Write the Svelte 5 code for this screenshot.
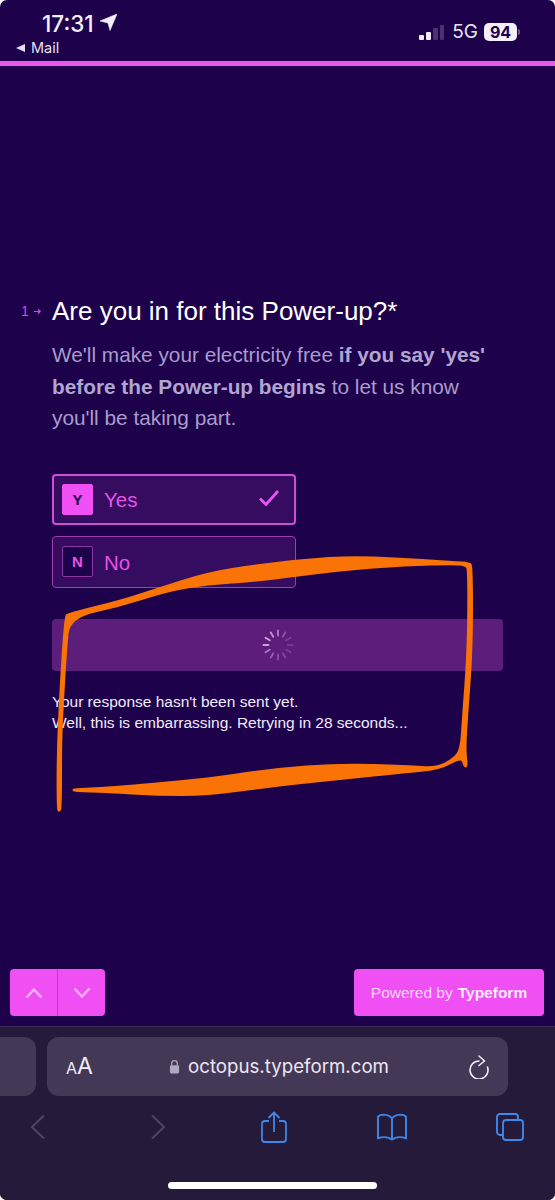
<script>
  const levels = [0.6, 0.35, 0.22, 0.18, 0.22, 0.26, 0.32, 0.42, 0.6, 0.85, 0.85, 0.75];
  const ticks = levels.map((opacity, i) => ({ angle: i * 30, opacity }));

  // Outline of the hand-drawn marker stroke, traced around its variable width.
  const outline = [
    [56.5, 810], [56.7, 750], [59, 700], [60.7, 670], [63, 635], [65, 616], [67, 613],
    [120, 600], [157, 588], [207, 572], [257, 564], [340, 555], [407, 558], [453, 561],
    [470, 562], [473, 566], [473, 650], [468, 717], [466, 750], [468, 765], [466, 768], [463, 766],
    [461.5, 758], [440, 770], [407, 773], [340, 780], [273, 787], [207, 796], [157, 796],
    [107, 793], [74, 792], [72, 790], [74, 788], [107, 787], [207, 778], [273, 768],
    [340, 763], [407, 765], [437, 767], [453, 758], [460, 749], [462, 717], [467, 650],
    [467.5, 570], [465, 566], [453, 565], [407, 566], [340, 571], [257, 582], [207, 585],
    [167, 592], [120, 607], [70, 618], [67, 650], [63, 717], [62, 750], [62, 810], [59, 812]
  ];
  const mid = (a, b) => [(a[0] + b[0]) / 2, (a[1] + b[1]) / 2];
  const scribble = outline.reduce((d, p, i) => {
    const m = mid(p, outline[(i + 1) % outline.length]);
    return `${d} Q${p[0]} ${p[1]} ${m[0]} ${m[1]}`;
  }, `M${mid(outline[outline.length - 1], outline[0]).join(' ')}`) + ' Z';
</script>

<div class="phone">
  <header class="status">
    <div class="status-left">
      <div class="time">17:31
        <svg class="loc" viewBox="0 0 17 17" width="17" height="17"><path d="M17 0 10 16.500 8 9 0 7Z" fill="#f3eefa" stroke="#f3eefa" stroke-width=".6" stroke-linejoin="round"/></svg>
      </div>
      <div class="back"><span class="tri"></span>Mail</div>
    </div>
    <div class="status-right">
      <div class="bars"><i class="on b1"></i><i class="on b2"></i><i class="b3"></i><i class="b4"></i></div>
      <span class="net">5G</span>
      <span class="batt">94</span><span class="nub"></span>
    </div>
  </header>
  <div class="progress"></div>

  <main class="form">
    <div class="question">
      <div class="num">1<svg viewBox="0 0 10 10" width="9" height="9"><path d="M1 5h7M5.500 2.500 8 5 5.500 7.500" fill="none" stroke="#d548d8" stroke-width="1.3"/></svg></div>
      <div class="body">
        <h1>Are you in for this Power-up?*</h1>
        <p class="desc">We'll make your electricity free <b>if you say 'yes' before the Power-up begins</b> to let us know you'll be taking part.</p>
        <div class="choices">
          <div class="choice selected">
            <span class="key">Y</span><span class="label">Yes</span>
            <svg class="check" viewBox="0 0 22 18" width="22" height="18"><path d="M2 9.500l6 6L20 2" fill="none" stroke="#ec55ef" stroke-width="2.700"/></svg>
          </div>
          <div class="choice">
            <span class="key">N</span><span class="label">No</span>
          </div>
        </div>
        <div class="submit">
          <svg viewBox="0 0 32 32" width="32" height="32">
            {#each ticks as t}
              <line x1="16" y1="1.500" x2="16" y2="6.500" stroke="#e3b8ee" stroke-width="1.900" stroke-linecap="round" opacity={t.opacity} transform="rotate({t.angle} 16 16)" />
            {/each}
          </svg>
        </div>
        <p class="msg">Your response hasn't been sent yet.<br />Well, this is embarrassing. Retrying in 28 seconds...</p>
      </div>
    </div>

    <div class="foot">
      <div class="arrows">
        <span class="arrow"><svg viewBox="0 0 18 12" width="18" height="12"><path d="M1.500 10.500 9 2.500l7.500 8" fill="none" stroke="#fbb2fb" stroke-width="2.400"/></svg></span>
        <span class="arrow second"><svg viewBox="0 0 18 12" width="18" height="12"><path d="M1.500 1.500 9 9.500l7.500-8" fill="none" stroke="#fbb2fb" stroke-width="2.400"/></svg></span>
      </div>
      <div class="powered"><span>Powered by</span><b>Typeform</b></div>
    </div>
  </main>

  <footer class="safari">
    <div class="url-row">
      <div class="prev-tab"></div>
      <div class="url">
        <span class="aa"><small>A</small>A</span>
        <span class="addr">
          <svg viewBox="0 0 12 16" width="11" height="15"><path d="M3 7V4.500a3 3 0 0 1 6 0V7" fill="none" stroke="#b0a8bf" stroke-width="1.400"/><rect x="1" y="6.500" width="10" height="9" rx="1.500" fill="#b0a8bf"/></svg>
          octopus.typeform.com
        </span>
        <svg class="reload" viewBox="0 0 22 24" width="22" height="24"><path d="M11 6A9 9 0 1 0 19.500 12" fill="none" stroke="#f1edf6" stroke-width="1.600" stroke-linecap="round"/><path d="M11 1l5.500 5L11 10.500" fill="none" stroke="#f1edf6" stroke-width="1.600" stroke-linecap="round" stroke-linejoin="round"/></svg>
      </div>
    </div>
    <nav class="tools">
      <svg viewBox="0 0 16 26" width="16" height="26"><path d="M14 1.500 2 13l12 11.500" fill="none" stroke="#4f4560" stroke-width="2"/></svg>
      <svg class="forward" viewBox="0 0 16 26" width="16" height="26"><path d="M2 1.500 14 13 2 24.500" fill="none" stroke="#4f4560" stroke-width="2"/></svg>
      <svg viewBox="0 0 26 32" width="26" height="32"><path d="M8 10H4a3 3 0 0 0-3 3v15a3 3 0 0 0 3 3h18a3 3 0 0 0 3-3V13a3 3 0 0 0-3-3h-4M13 21V2M7.500 7 13 1.500 18.500 7" fill="none" stroke="#3f87e8" stroke-width="1.800"/></svg>
      <svg viewBox="0 0 32 28" width="32" height="28"><path d="M16 5.500C13 1 5 1 2 3.500V25.500C6 23.500 12 23.500 16 26.500 20 23.500 26 23.500 30 25.500V3.500C27 1 19 1 16 5.500ZM16 5.500V26.500" fill="none" stroke="#3f87e8" stroke-width="1.900" stroke-linejoin="round"/></svg>
      <svg viewBox="0 0 30 30" width="30" height="30"><path d="M7 23H5a3 3 0 0 1-3-3V5a3 3 0 0 1 3-3h15a3 3 0 0 1 3 3v2" fill="none" stroke="#3f87e8" stroke-width="1.900"/><rect x="8" y="8" width="20" height="20" rx="3" fill="none" stroke="#3f87e8" stroke-width="1.900"/></svg>
    </nav>
    <div class="home"></div>
  </footer>

  <svg class="scribble" viewBox="0 0 555 1200" width="555" height="1200">
    <path fill="#f97306" d={scribble} />
  </svg>
</div>

<style>
  :global(body) { margin: 0; background: #fff; }
  .phone {
    position: relative;
    width: 555px;
    height: 1200px;
    overflow: hidden;
    display: flex;
    flex-direction: column;
    background: #1d024b;
    border-radius: 7px;
    font-family: "Liberation Sans", Arial, sans-serif;
    color: #fff;
  }
  .status {
    height: 61px;
    box-sizing: border-box;
    display: flex;
    justify-content: space-between;
    padding: 11px 35px 0 16px;
    flex: none;
  }
  .time {
    display: flex;
    align-items: center;
    gap: 6px;
    margin-left: 26px;
    font: 500 22.500px/26px Inter, sans-serif;
    color: #f3eefa;
  }
  .loc { margin-top: -3px; }
  .back {
    display: flex;
    align-items: center;
    gap: 6px;
    font: 400 14.500px/16px Inter, sans-serif;
    color: #e6dff0;
    margin-top: 3px;
  }
  .tri {
    width: 0; height: 0;
    border-style: solid;
    border-width: 4.500px 9px 4.500px 0;
    border-color: transparent #e6dff0 transparent transparent;
  }
  .status-right {
    display: flex;
    align-items: center;
    height: 22px;
    margin-top: 10px;
    font: 400 19px/22px Inter, sans-serif;
    color: #e8e2f2;
  }
  .bars { display: flex; align-items: flex-end; gap: 2px; height: 15px; margin-right: 8px; }
  .bars i { width: 4.750px; border-radius: 1px; background: #4a3270; }
  .bars .on { background: #f0ebf7; }
  .b1 { height: 5px; } .b2 { height: 8px; } .b3 { height: 12px; } .b4 { height: 15px; }
  .net { margin-right: 6px; }
  .batt {
    width: 33px; height: 18px;
    border-radius: 5px;
    background: #f3eff8;
    color: #1d024b;
    font: 700 16px/18px Inter, sans-serif;
    text-align: center;
  }
  .nub { width: 2px; height: 6px; margin-left: 1px; background: #6a5889; border-radius: 0 2px 2px 0; }
  .progress { height: 5px; flex: none; background: #ee55ee; }

  .form { flex: 1; min-height: 0; display: flex; flex-direction: column; justify-content: space-between; }
  .question {
    display: flex;
    padding-top: 230px;
  }
  .num {
    width: 52px;
    box-sizing: border-box;
    padding: 6px 0 0 21px;
    display: flex;
    align-items: flex-start;
    gap: 4px;
    font-size: 14px;
    line-height: 18px;
    color: #d548d8;
    flex: none;
  }
  .num svg { margin-top: 5px; }
  .body { width: 451px; }
  h1 {
    margin: 0;
    font-size: 26px;
    font-weight: 400;
    line-height: 30px;
    color: #fff;
  }
  .desc {
    margin: 13px 0 0;
    font-size: 20.800px;
    line-height: 31.500px;
    color: #a99ccb;
  }
  .desc b { font-weight: 700; color: #b1a5d2; }
  .choices { display: flex; flex-direction: column; gap: 11px; margin-top: 40px; width: 244px; }
  .choice {
    position: relative;
    display: flex;
    align-items: center;
    gap: 11px;
    height: 52px;
    box-sizing: border-box;
    padding-left: 9px;
    background: #350c5f;
    border: 1px solid #a03eb0;
    border-radius: 4px;
    font-size: 20.500px;
    color: #e552e8;
  }
  .choice.selected { border: 2px solid #cc4fd4; padding-left: 8px; height: 51px; }
  .label { padding-top: 2px; }
  .key {
    width: 31px; height: 31px;
    box-sizing: border-box;
    display: flex; align-items: center; justify-content: center;
    border: 1px solid #8b37a3;
    border-radius: 2px;
    background: #1d024b;
    font-size: 15px;
    font-weight: 700;
    color: #e552e8;
  }
  .selected .key { background: #f04ff3; border-color: #f04ff3; color: #1d024b; }
  .check { position: absolute; right: 14px; top: 13px; }
  .submit {
    margin-top: 31px;
    height: 52px;
    border-radius: 4px;
    background: #5c1d7b;
    display: flex;
    align-items: center;
    justify-content: center;
  }
  .msg {
    margin: 20px 0 0;
    font-size: 15.500px;
    line-height: 21px;
    color: #f2eafa;
  }
  .foot {
    display: flex;
    justify-content: space-between;
    padding: 0 11px 10px 10px;
  }
  .arrows { display: flex; height: 47px; border-radius: 4px; overflow: hidden; }
  .arrow { width: 47px; background: #f04ff3; display: flex; align-items: center; justify-content: center; }
  .arrow.second { width: 47px; border-left: 1px solid #b93fc3; }
  .powered {
    width: 190px;
    height: 47px;
    border-radius: 4px;
    background: #f04ff3;
    display: flex;
    align-items: center;
    justify-content: center;
    gap: 5px;
    font-size: 15.500px;
    color: #fcd6fc;
  }
  .powered b { color: #fdeafd; }

  .safari {
    flex: none;
    height: 174px;
    box-sizing: border-box;
    background: #261a3b;
    border-top: 1px solid #3a2a52;
    padding-top: 10px;
    position: relative;
  }
  .url-row { display: flex; gap: 11px; height: 59px; }
  .prev-tab { width: 36px; background: #443857; border-radius: 0 12px 12px 0; }
  .url {
    width: 461px;
    box-sizing: border-box;
    background: #443857;
    border-radius: 12px;
    display: flex;
    align-items: center;
    padding: 0 18px 0 19px;
    position: relative;
  }
  .aa { font: 400 23px/28px Inter, sans-serif; color: #f1edf6; }
  .aa small { font-size: 16px; }
  .addr {
    position: absolute;
    left: 122px;
    display: flex;
    align-items: center;
    gap: 8px;
    font: 400 18.700px/24px Inter, sans-serif;
    color: #ece7f2;
  }
  .reload { margin-left: auto; }
  .tools {
    display: grid;
    grid-template-columns: repeat(5, 118px);
    justify-items: center;
    align-items: center;
    margin: 15px 0 0 -21px;
  }
  .forward { margin-left: 4px; }
  .home {
    position: absolute;
    left: 168px; bottom: 11px;
    width: 209px; height: 7px;
    border-radius: 4px;
    background: #fff;
  }
  .scribble { position: absolute; left: 0; top: 0; pointer-events: none; }
</style>
